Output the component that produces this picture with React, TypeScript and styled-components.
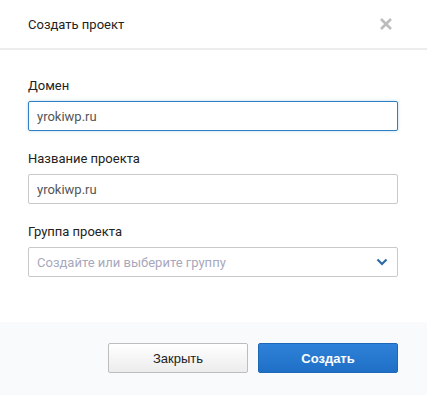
import React from "react";
import styled, { createGlobalStyle } from "styled-components";

const Global = createGlobalStyle`
  html, body { margin: 0; padding: 0; background: #fff; }
  body { font-family: Roboto, "Noto Sans", Arial, sans-serif; }
  * { box-sizing: border-box; }
`;

const Modal = styled.div`
  width: 427px;
  height: 395px;
  display: flex;
  flex-direction: column;
  background: #fff;
`;

const Header = styled.div`
  height: 50px;
  display: flex;
  align-items: center;
  justify-content: space-between;
  padding: 0 34px 0 28px;
  border-bottom: 2px solid #ececec;
`;

const Title = styled.div`
  font-size: 13px;
  color: #222;
  padding-top: 1px;
`;

const CloseBtn = styled.button`
  border: none;
  background: none;
  padding: 0;
  width: 14px;
  height: 14px;
  display: flex;
  cursor: pointer;
`;

const Body = styled.div`
  flex: 1;
  display: flex;
  flex-direction: column;
  gap: 20px;
  padding: 28px 29px 0 28px;
`;

const Field = styled.div`
  display: flex;
  flex-direction: column;
  gap: 7px;
`;

const Label = styled.label`
  font-size: 13px;
  line-height: 16px;
  color: #222;
`;

const Input = styled.input<{ $focused?: boolean }>`
  height: 30px;
  width: 100%;
  border: 1px solid ${(p) => (p.$focused ? "#2f7fc4" : "#c9c9c9")};
  box-shadow: ${(p) => (p.$focused ? "0 0 3px rgba(47,127,196,0.35)" : "none")};
  border-radius: 2px;
  padding: 0 8px;
  font-family: Roboto, Arial, sans-serif;
  font-size: 13px;
  color: #555;
  outline: none;
  background: #fff;
`;

const SelectBox = styled.div`
  height: 30px;
  border: 1px solid #c9c9c9;
  border-radius: 2px;
  display: flex;
  align-items: center;
  justify-content: space-between;
  padding: 0 9px 0 8px;
  font-size: 13px;
  color: #a8a8bd;
`;

const Footer = styled.div`
  height: 73px;
  background: #f9fafc;
  display: flex;
  justify-content: flex-end;
  align-items: flex-start;
  gap: 10px;
  padding: 21px 29px 0 28px;
`;

const Button = styled.button<{ $primary?: boolean }>`
  width: 140px;
  height: 30px;
  border-radius: 2px;
  font-family: "Liberation Sans", Arial, sans-serif;
  font-size: 13px;
  cursor: pointer;
  border: 1px solid ${(p) => (p.$primary ? "#1d68b8" : "#bdbdbd")};
  background: ${(p) =>
    p.$primary
      ? "linear-gradient(#2f82d9, #1f6fc6)"
      : "linear-gradient(#ffffff, #ececec)"};
  color: ${(p) => (p.$primary ? "#fff" : "#222")};
  font-weight: ${(p) => (p.$primary ? 700 : 400)};
`;

export default function App() {
  return (
    <>
      <Global />
      <Modal>
        <Header>
          <Title>Создать проект</Title>
          <CloseBtn aria-label="close">
            <svg width="14" height="14" viewBox="0 0 14 14">
              <path d="M2 2L12 12M12 2L2 12" stroke="#bcbcbc" strokeWidth="2.6" strokeLinecap="butt" />
            </svg>
          </CloseBtn>
        </Header>
        <Body>
          <Field>
            <Label>Домен</Label>
            <Input $focused defaultValue="yrokiwp.ru" />
          </Field>
          <Field>
            <Label>Название проекта</Label>
            <Input defaultValue="yrokiwp.ru" />
          </Field>
          <Field>
            <Label>Группа проекта</Label>
            <SelectBox>
              <span>Создайте или выберите группу</span>
              <svg width="12" height="8" viewBox="0 0 12 8">
                <path d="M1.5 1.5L6 6L10.5 1.5" stroke="#2c6aa8" strokeWidth="2.2" fill="none" />
              </svg>
            </SelectBox>
          </Field>
        </Body>
        <Footer>
          <Button>Закрыть</Button>
          <Button $primary>Создать</Button>
        </Footer>
      </Modal>
    </>
  );
}
